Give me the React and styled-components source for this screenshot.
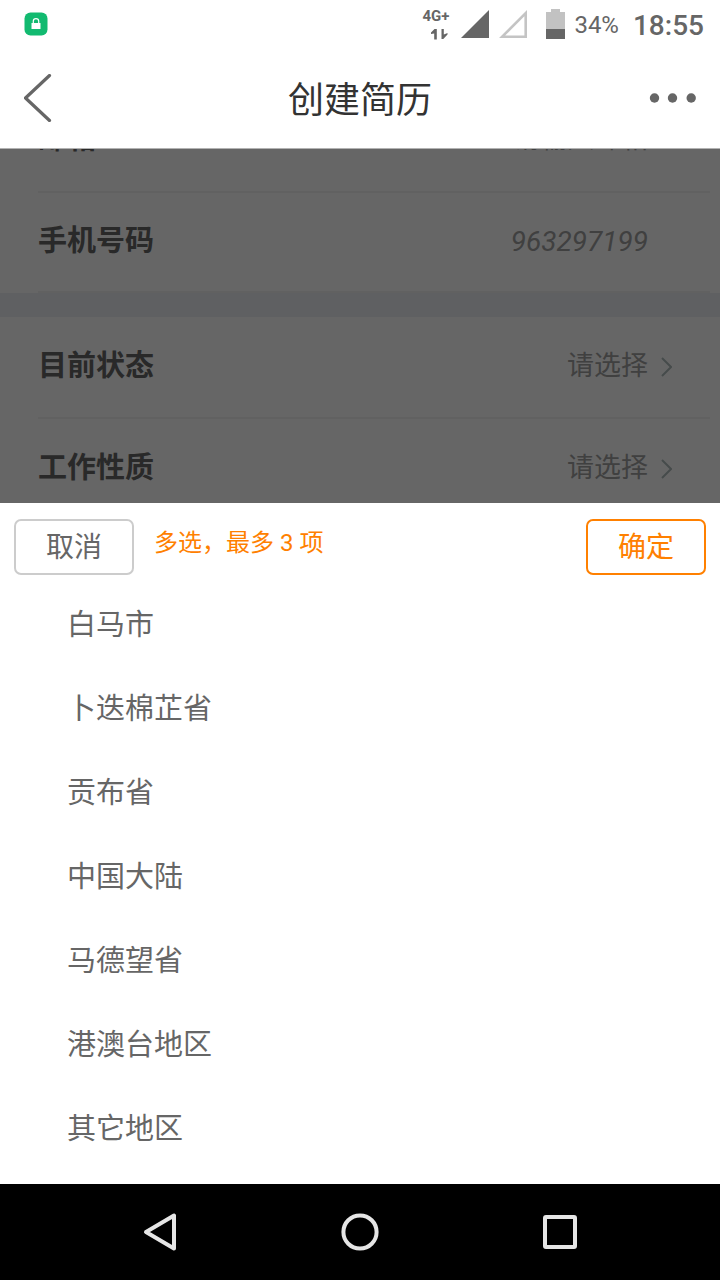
import React from 'react';
import styled, { createGlobalStyle } from 'styled-components';

const GlobalStyle = createGlobalStyle`
  * {
    box-sizing: border-box;
  }
  body {
    margin: 0;
    background: #ffffff;
    font-family: Roboto, 'Noto Sans CJK SC', sans-serif;
    color: #666666;
  }
  button, input {
    font-family: inherit;
    color: inherit;
    background: none;
    border: 0;
    padding: 0;
    margin: 0;
  }
  svg {
    display: block;
    flex: none;
  }
`;

const Page = styled.div`
  display: flex;
  flex-direction: column;
  height: 100vh;
`;

const StatusBar = styled.div`
  display: flex;
  align-items: center;
  justify-content: space-between;
  flex: none;
  height: 48px;
  padding: 0 16px 0 24px;
`;
const StatusIcons = styled.div`
  display: flex;
  align-items: center;
`;
const Network = styled.div`
  display: flex;
  flex-direction: column;
  align-items: flex-end;
  margin-right: 12px;
  font-size: 15px;
  font-weight: 700;
  line-height: 16px;
`;
const Signals = styled.div`
  display: flex;
  gap: 10px;
  margin-right: 19px;
`;
const Battery = styled.span`
  margin-left: 9px;
  padding-top: 3px;
  font-size: 24px;
  line-height: 45px;
`;
const Clock = styled.time`
  margin-left: 14px;
  padding-top: 3px;
  font-size: 28px;
  font-weight: 500;
  line-height: 45px;
`;

const Header = styled.header`
  display: grid;
  grid-template-columns: 80px 1fr 80px;
  align-items: center;
  flex: none;
  height: 101px;
  padding: 0 24px;
  border-bottom: 1px solid #b2b2b2;
`;
const HeaderButton = styled.button`
  display: flex;
  justify-content: ${(props) => (props.$right ? 'flex-end' : 'flex-start')};
`;
const Title = styled.h1`
  margin: 0;
  padding-top: 6px;
  font-size: 36px;
  font-weight: 400;
  line-height: 48px;
  text-align: center;
  color: #333333;
`;

const FormArea = styled.main`
  position: relative;
  display: flex;
  flex-direction: column;
  justify-content: flex-end;
  flex: 1;
  min-height: 0;
  overflow: hidden;
`;
const Shade = styled.div`
  position: absolute;
  inset: 0;
  background: rgba(0, 0, 0, 0.6);
`;
const Group = styled.section`
  flex: none;
  border-top: ${(props) => (props.$gap ? '24px solid #edf1f4' : '0')};
`;
const rowHeights = { short: '100px', normal: '102px', tall: '104px' };
const Row = styled.div`
  display: flex;
  align-items: center;
  height: ${(props) => rowHeights[props.$size || 'normal']};
  margin: 0 10px 0 38px;
  padding-right: ${(props) => (props.$link ? '38px' : '62px')};
  border-bottom: 2px solid #f3f3f3;
`;
const Label = styled.label`
  padding-bottom: 2px;
  font-size: 29px;
  font-weight: 700;
  line-height: 40px;
`;
const Field = styled.input`
  flex: 1;
  min-width: 0;
  height: 40px;
  padding-bottom: 2px;
  font-size: ${(props) => (props.value ? '28px' : '27px')};
  font-style: ${(props) => (props.value ? 'italic' : 'normal')};
  text-align: right;
  color: #a0a0a0;
  outline: 0;

  &::placeholder {
    color: #a0a0a0;
  }
`;
const Picker = styled.button`
  display: flex;
  align-items: center;
  justify-content: flex-end;
  gap: 13px;
  flex: 1;
  font-size: 27px;
  line-height: 40px;
  color: #a0a0a0;
`;
const PickerText = styled.span`
  padding-bottom: 3px;
`;

/* covers the lower edge of the last form row */
const Sheet = styled.section`
  position: relative;
  flex: none;
  margin-top: -18px;
  background: #ffffff;
`;
const Toolbar = styled.div`
  display: flex;
  align-items: flex-start;
  padding: 16px 14px 0;
`;
const SheetButton = styled.button`
  width: 120px;
  height: 56px;
  padding-top: 2px;
  border: 2px solid ${(props) => (props.$primary ? '#ff8000' : '#cccccc')};
  border-radius: 7px;
  font-size: 28px;
  line-height: 48px;
  color: ${(props) => (props.$primary ? '#ff8000' : '#666666')};
`;
const Hint = styled.p`
  flex: 1;
  margin: 0;
  padding-left: 20px;
  font-size: 24px;
  line-height: 48px;
  color: #ff8000;
`;
const Options = styled.ul`
  margin: 0;
  padding: 5px 0 16px;
  list-style: none;
`;
const Option = styled.button`
  display: block;
  width: 100%;
  height: 84px;
  padding-left: 67px;
  font-size: 29px;
  text-align: left;
`;

const NavBar = styled.nav`
  display: grid;
  grid-template-columns: repeat(3, 1fr);
  flex: none;
  height: 96px;
  padding: 0 60px;
  background: #000000;
`;
const NavButton = styled.button`
  display: flex;
  align-items: center;
  justify-content: center;
`;

const regions = ['白马市', '卜迭棉芷省', '贡布省', '中国大陆', '马德望省', '港澳台地区', '其它地区'];

function LockIcon() {
  return (
    <svg width="24" height="24" viewBox="0 0 24 24">
      <rect x="0.5" y="0.5" width="23" height="23" rx="6" fill="#12ba70" />
      <rect x="7.5" y="11" width="9" height="6" fill="#ffffff" />
      <path d="M9.3 11V9.3a2.7 2.7 0 0 1 5.4 0V11" fill="none" stroke="#ffffff" strokeWidth="1.2" />
    </svg>
  );
}

function Chevron() {
  return (
    <svg width="11" height="20" viewBox="0 0 11 20">
      <path d="M1 1l9 9-9 9" fill="none" stroke="#b0bcbc" strokeWidth="2" />
    </svg>
  );
}

function PickerRow({ id, label }) {
  return (
    <Row $link>
      <Label htmlFor={id}>{label}</Label>
      <Picker id={id} type="button">
        <PickerText>请选择</PickerText>
        <Chevron />
      </Picker>
    </Row>
  );
}

export default function App() {
  return (
    <Page>
      <GlobalStyle />
      <StatusBar>
        <LockIcon />
        <StatusIcons>
          <Network>
            4G+
            <svg width="20" height="16" viewBox="0 0 20 16">
              <path d="M5.5 5h2.3v10.5H5.2V9.5L2 10V8.5zM12.5 5h2.3v5.5l3.7-1.500v1.500l-4.200 4.500h-1.800z" fill="#666666" />
            </svg>
          </Network>
          <Signals>
            <svg width="28" height="28" viewBox="0 0 28 28">
              <path d="M28 0v28H0z" fill="#666666" />
            </svg>
            <svg width="28" height="28" viewBox="0 0 28 28">
              <path d="M26.7 3.2v23.5H3.2z" fill="none" stroke="#c4c4c4" strokeWidth="2.6" />
            </svg>
          </Signals>
          <svg width="19" height="30" viewBox="0 0 19 30">
            <path d="M5 0h9v3h5v17H0V3h5z" fill="#c2c2c2" />
            <path d="M0 20h19v10H0z" fill="#666666" />
          </svg>
          <Battery>34%</Battery>
          <Clock>18:55</Clock>
        </StatusIcons>
      </StatusBar>
      <Header>
        <HeaderButton type="button" aria-label="返回">
          <svg width="28" height="48" viewBox="0 0 28 48">
            <path d="M25.5 1.5L1.5 24l24 22.5" fill="none" stroke="#666666" strokeWidth="3.2" strokeLinecap="round" strokeLinejoin="round" />
          </svg>
        </HeaderButton>
        <Title>创建简历</Title>
        <HeaderButton type="button" aria-label="更多" $right>
          <svg width="47" height="10" viewBox="0 0 47 10">
            <g fill="#666666">
              <circle cx="5.5" cy="5" r="4.7" />
              <circle cx="23.5" cy="5" r="4.7" />
              <circle cx="42.2" cy="5" r="4.7" />
            </g>
          </svg>
        </HeaderButton>
      </Header>
      <FormArea>
        <Group>
          <Row $size="tall">
            <Label htmlFor="email">邮箱</Label>
            <Field id="email" type="email" placeholder="请输入邮箱" />
          </Row>
          <Row $size="short">
            <Label htmlFor="phone">手机号码</Label>
            <Field id="phone" type="tel" value="963297199" readOnly />
          </Row>
        </Group>
        <Group $gap>
          <PickerRow id="status" label="目前状态" />
          <PickerRow id="nature" label="工作性质" />
        </Group>
        <Shade />
      </FormArea>
      <Sheet>
        <Toolbar>
          <SheetButton type="button">取消</SheetButton>
          <Hint>多选，最多 3 项</Hint>
          <SheetButton type="button" $primary>确定</SheetButton>
        </Toolbar>
        <Options>
          {regions.map((name) => (
            <li key={name}>
              <Option type="button">{name}</Option>
            </li>
          ))}
        </Options>
      </Sheet>
      <NavBar>
        <NavButton type="button" aria-label="后退">
          <svg width="34" height="40" viewBox="0 0 34 40">
            <path d="M31 3.5v33L3 20z" fill="none" stroke="#e6e6e6" strokeWidth="4" strokeLinejoin="round" />
          </svg>
        </NavButton>
        <NavButton type="button" aria-label="主屏幕">
          <svg width="38" height="38" viewBox="0 0 38 38">
            <circle cx="19" cy="19" r="16.6" fill="none" stroke="#e6e6e6" strokeWidth="4" />
          </svg>
        </NavButton>
        <NavButton type="button" aria-label="最近任务">
          <svg width="34" height="34" viewBox="0 0 34 34">
            <rect x="2" y="2" width="30" height="30" rx="1" fill="none" stroke="#e6e6e6" strokeWidth="4" />
          </svg>
        </NavButton>
      </NavBar>
    </Page>
  );
}
